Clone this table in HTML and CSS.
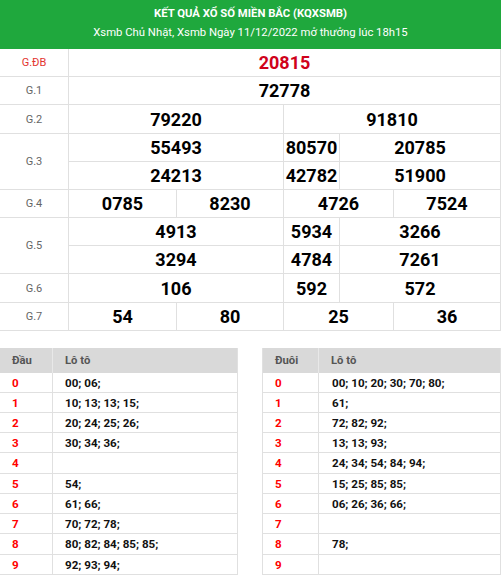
FILE: index.html
```html
<!DOCTYPE html>
<html lang="vi">
<head>
<meta charset="utf-8">
<title>KQXSMB</title>
<link rel="stylesheet" href="styles.css">
</head>
<body>
<div class="header">
  <div class="title">KẾT QUẢ XỔ SỐ MIỀN BẮC (KQXSMB)</div>
  <div class="subtitle">Xsmb Chủ Nhật, Xsmb Ngày 11/12/2022 mở thưởng lúc 18h15</div>
</div>

<div class="results">
  <div class="lbl db">G.ĐB</div>
  <div class="num red c-all">20815</div>

  <div class="lbl">G.1</div>
  <div class="num c-all">72778</div>

  <div class="lbl">G.2</div>
  <div class="num c-left">79220</div>
  <div class="num c-right2">91810</div>

  <div class="lbl span2">G.3</div>
  <div class="num c-left">55493</div>
  <div class="num c-mid">80570</div>
  <div class="num c-right">20785</div>
  <div class="num c-left">24213</div>
  <div class="num c-mid">42782</div>
  <div class="num c-right">51900</div>

  <div class="lbl">G.4</div>
  <div class="num c-q1">0785</div>
  <div class="num c-q2">8230</div>
  <div class="num c-q3">4726</div>
  <div class="num c-q4">7524</div>

  <div class="lbl span2">G.5</div>
  <div class="num c-left">4913</div>
  <div class="num c-mid">5934</div>
  <div class="num c-right">3266</div>
  <div class="num c-left">3294</div>
  <div class="num c-mid">4784</div>
  <div class="num c-right">7261</div>

  <div class="lbl">G.6</div>
  <div class="num c-left">106</div>
  <div class="num c-mid">592</div>
  <div class="num c-right">572</div>

  <div class="lbl">G.7</div>
  <div class="num c-q1">54</div>
  <div class="num c-q2">80</div>
  <div class="num c-q3">25</div>
  <div class="num c-q4">36</div>
</div>

<div class="loto">
  <div class="lt lt-dau">
    <div class="th">Đầu</div><div class="th">Lô tô</div>
    <div class="k">0</div><div class="v">00; 06;</div>
    <div class="k">1</div><div class="v">10; 13; 13; 15;</div>
    <div class="k">2</div><div class="v">20; 24; 25; 26;</div>
    <div class="k">3</div><div class="v">30; 34; 36;</div>
    <div class="k">4</div><div class="v"></div>
    <div class="k">5</div><div class="v">54;</div>
    <div class="k">6</div><div class="v">61; 66;</div>
    <div class="k">7</div><div class="v">70; 72; 78;</div>
    <div class="k">8</div><div class="v">80; 82; 84; 85; 85;</div>
    <div class="k">9</div><div class="v">92; 93; 94;</div>
  </div>
  <div class="lt lt-duoi">
    <div class="th">Đuôi</div><div class="th">Lô tô</div>
    <div class="k">0</div><div class="v">00; 10; 20; 30; 70; 80;</div>
    <div class="k">1</div><div class="v">61;</div>
    <div class="k">2</div><div class="v">72; 82; 92;</div>
    <div class="k">3</div><div class="v">13; 13; 93;</div>
    <div class="k">4</div><div class="v">24; 34; 54; 84; 94;</div>
    <div class="k">5</div><div class="v">15; 25; 85; 85;</div>
    <div class="k">6</div><div class="v">06; 26; 36; 66;</div>
    <div class="k">7</div><div class="v"></div>
    <div class="k">8</div><div class="v">78;</div>
    <div class="k">9</div><div class="v"></div>
  </div>
</div>
</body>
</html>
```

FILE: styles.css
```css
html { overflow: hidden; }
* { box-sizing: border-box; }
body {
  margin: 0;
  font-family: Roboto, "Noto Sans", Arial, sans-serif;
  background: #fff;
  color: #000;
}

.header {
  height: 49px;
  background: #1fa83d;
  color: #fff;
  text-align: center;
  padding-top: 6px;
}
.title {
  font-size: 11.3px;
  font-weight: 700;
  line-height: 16px;
}
.subtitle {
  font-size: 11.3px;
  line-height: 16px;
  margin-top: 3px;
}

.results {
  display: grid;
  grid-template-columns: 69px 108px 107px 56px 54px 107px;
  grid-template-rows: 28px 28px 29px 28px 28px 28px 28px 28px 29px 28px;
}
.results > div {
  border-bottom: 1px solid #e0e0e0;
  border-right: 1px solid #e0e0e0;
  display: flex;
  align-items: center;
  justify-content: center;
}
.lbl {
  grid-column: 1;
  font-size: 11px;
  color: #666;
}
.lbl.db { color: #e3342f; }
.span2 { grid-row: span 2; }
.num {
  font-size: 18px;
  font-weight: 700;
  color: #000;
}
.num.red { color: #d0021b; }
.c-all { grid-column: 2 / 7; }
.c-left { grid-column: 2 / 4; }
.c-right2 { grid-column: 4 / 7; }
.c-mid { grid-column: 4 / 5; }
.c-right { grid-column: 5 / 7; }
.c-q1 { grid-column: 2 / 3; }
.c-q2 { grid-column: 3 / 4; }
.c-q3 { grid-column: 4 / 6; }
.c-q4 { grid-column: 6 / 7; }

.loto {
  display: flex;
  gap: 24px;
  margin-top: 17px;
  margin-left: -1px;
}
.lt {
  width: 240px;
  display: grid;
  grid-template-rows: 25px 20px 20px 20px 20px 21px 20px 20px 20px 21px 20px;
  border-left: 1px solid #e0e0e0;
  border-right: 1px solid #e0e0e0;
}
.lt-dau { grid-template-columns: 53px 1fr; }
.lt-duoi { grid-template-columns: 56px 1fr; }
.lt > div {
  display: flex;
  align-items: center;
  padding-left: 12px;
  border-bottom: 1px solid #e0e0e0;
  border-right: 1px solid #e0e0e0;
  font-size: 11.6px;
  font-weight: 700;
}
.lt > div:nth-child(2n) { border-right: none; }
.lt .th {
  background: #d9d9d9;
  color: #555;
  font-size: 11.3px;
  border-bottom: none;
  border-right-color: #e8e8e8;
}
.lt .k { color: #f00; }
.lt .v { color: #111; padding-left: 12px; }
.lt-duoi .v { padding-left: 13px; }
```
